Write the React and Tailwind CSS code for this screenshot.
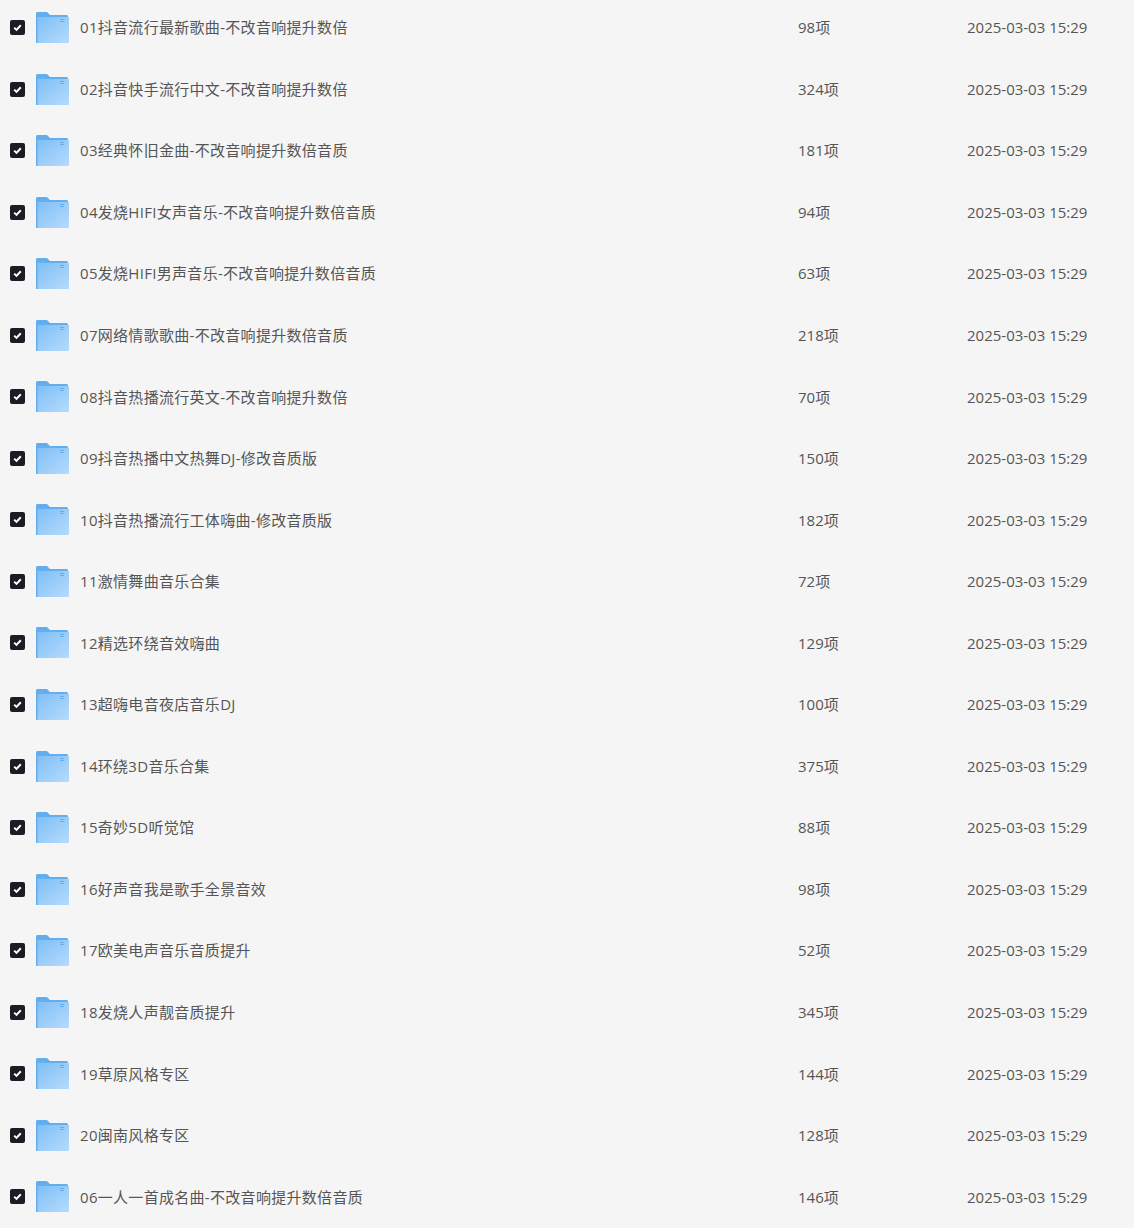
import React from 'react';

const rows = [
  ['01抖音流行最新歌曲-不改音响提升数倍', '98项'],
  ['02抖音快手流行中文-不改音响提升数倍', '324项'],
  ['03经典怀旧金曲-不改音响提升数倍音质', '181项'],
  ['04发烧HIFI女声音乐-不改音响提升数倍音质', '94项'],
  ['05发烧HIFI男声音乐-不改音响提升数倍音质', '63项'],
  ['07网络情歌歌曲-不改音响提升数倍音质', '218项'],
  ['08抖音热播流行英文-不改音响提升数倍', '70项'],
  ['09抖音热播中文热舞DJ-修改音质版', '150项'],
  ['10抖音热播流行工体嗨曲-修改音质版', '182项'],
  ['11激情舞曲音乐合集', '72项'],
  ['12精选环绕音效嗨曲', '129项'],
  ['13超嗨电音夜店音乐DJ', '100项'],
  ['14环绕3D音乐合集', '375项'],
  ['15奇妙5D听觉馆', '88项'],
  ['16好声音我是歌手全景音效', '98项'],
  ['17欧美电声音乐音质提升', '52项'],
  ['18发烧人声靓音质提升', '345项'],
  ['19草原风格专区', '144项'],
  ['20闽南风格专区', '128项'],
  ['06一人一首成名曲-不改音响提升数倍音质', '146项'],
];

const FolderIcon = () => (
  <svg width="34" height="33" viewBox="0 0 34 33" className="shrink-0">
    <defs>
      <linearGradient id="folderFront" x1="0" y1="0" x2="1" y2="1">
        <stop offset="0" stopColor="#7fbef5" />
        <stop offset="1" stopColor="#b5dbfd" />
      </linearGradient>
    </defs>
    <path d="M1 2.5C1 1.6 1.6 1 2.5 1h9.5l3 3h16.5c.8 0 1.5.7 1.5 1.5V10H1z" fill="#62aeee" />
    <path d="M1 6h32c.6 0 1 .4 1 1v24c0 .6-.4 1-1 1H2c-.6 0-1-.4-1-1z" fill="url(#folderFront)" />
    <path d="M1 6h1.500v26H2c-.6 0-1-.4-1-1z" fill="#62aeee" />
    <rect x="25" y="8" width="4" height="1" fill="#62aeee" />
    <rect x="25" y="10" width="4" height="1" fill="#62aeee" />
  </svg>
);

const Check = () => (
  <div className="flex h-[15px] w-[15px] shrink-0 items-center justify-center rounded-[2px] bg-[#1c1c24]">
    <svg width="11" height="11" viewBox="0 0 11 11">
      <path d="M2.200 5.600 4.500 7.900 8.800 3.200" fill="none" stroke="#fff" strokeWidth="2" />
    </svg>
  </div>
);

export default function App() {
  return (
    <div className="h-[1228px] overflow-hidden bg-[#f5f5f5] font-['Open_Sans','Noto_Sans_CJK_SC',sans-serif] text-[15px] text-[#555]">
      <div className="-mt-[3.3px]">
        {rows.map(([name, count]) => (
          <div key={name} className="flex h-[61.55px] items-center pl-[10px]">
            <Check />
            <div className="ml-[10px]"><FolderIcon /></div>
            <span className="ml-[11px] w-[718px] tracking-[0.3px]">{name}</span>
            <span className="w-[169px]">{count}</span>
            <span>2025-03-03 15:29</span>
          </div>
        ))}
      </div>
    </div>
  );
}
